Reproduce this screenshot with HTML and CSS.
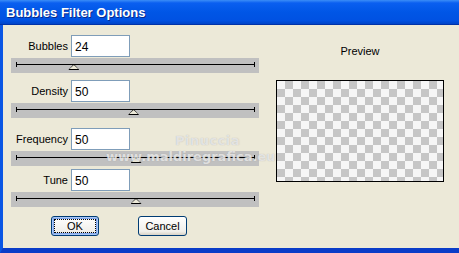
FILE: index.html
```html
<!DOCTYPE html>
<html lang="en">
<head>
    <meta charset="UTF-8">
    <title>Bubbles Filter Options</title>
    <link rel="stylesheet" href="styles.css">
</head>
<body>
    <div class="window">
        <div class="titlebar">Bubbles Filter Options</div>
        <div class="client">
            <div class="controls">
                <div class="param">
                    <div class="field">
                        <label for="bubbles">Bubbles</label>
                        <input type="text" id="bubbles" value="24">
                    </div>
                    <div class="slider"><div class="rail"><span class="thumb" style="left: 24%"></span></div></div>
                </div>
                <div class="param">
                    <div class="field">
                        <label for="density">Density</label>
                        <input type="text" id="density" value="50">
                    </div>
                    <div class="slider"><div class="rail"><span class="thumb" style="left: 49%"></span></div></div>
                </div>
                <div class="param">
                    <div class="field">
                        <label for="frequency">Frequency</label>
                        <input type="text" id="frequency" value="50">
                    </div>
                    <div class="slider"><div class="rail"><span class="thumb" style="left: 50%"></span></div></div>
                </div>
                <div class="param">
                    <div class="field">
                        <label for="tune">Tune</label>
                        <input type="text" id="tune" value="50">
                    </div>
                    <div class="slider"><div class="rail"><span class="thumb" style="left: 50%"></span></div></div>
                </div>
                <div class="buttons">
                    <button type="button" class="default">OK</button>
                    <button type="button">Cancel</button>
                </div>
            </div>

            <div class="preview">
                <div class="preview-title">Preview</div>
                <div class="preview-box"></div>
            </div>

            <!-- watermark over the dialog -->
            <div class="watermark">
                <span class="wm-name">Pinuccia</span>
                <span class="wm-site">www.maldiregrafica.eu</span>
            </div>
        </div>
    </div>
</body>
</html>
```

FILE: styles.css
```css
* {
    box-sizing: border-box;
}
body {
    margin: 0;
    font-family: 'Liberation Sans', Arial, sans-serif;
    font-size: 11px;
    color: #000;
    background: #ece9d8;
}
.window {
    width: 459px;
    height: 253px;
    display: flex;
    flex-direction: column;
    overflow: hidden;
}
.titlebar {
    height: 25px;
    padding: 5px 0 0 6px;
    background: linear-gradient(#3b8df7 0, #0a5ff0 3px, #0056e6 50%, #0051e2 85%, #0044c8 100%);
    border-bottom: 1px solid #0032a8;
    color: #fff;
    font-weight: bold;
    font-size: 13px;
    text-shadow: 1px 1px 0 #0a2a8a;
}
.client {
    position: relative;
    flex: 1;
    display: flex;
    background: #ece9d8;
    border-left: 3px solid #0a56e4;
    border-bottom: 5px solid #0a3cc8;
}
.controls {
    width: 256px;
    padding: 10px 0 0 8px;
}
.param {
    margin-bottom: 7px;
}
.param:nth-child(2) {
    margin-bottom: 10px;
}
.param:nth-child(3) {
    margin-bottom: 3px;
}
.field {
    display: flex;
    align-items: center;
}
.field label {
    width: 57px;
    margin-right: 3px;
    text-align: right;
}
.field input {
    width: 59px;
    height: 22px;
    padding: 1px 3px 0;
    border: 1px solid #7f9db9;
    background: #fff;
    font-family: 'Liberation Sans', Arial, sans-serif;
    font-size: 12px;
    color: #000;
}
.slider {
    width: 248px;
    height: 15px;
    margin-top: 1px;
    padding: 6px 4px 0 5px;
    background: #c0c0c0;
}
.rail {
    position: relative;
    height: 1px;
    background: #000;
}
.rail::before,
.rail::after {
    content: "";
    position: absolute;
    top: -2px;
    width: 1px;
    height: 5px;
    background: #000;
}
.rail::before {
    left: 0;
}
.rail::after {
    right: 0;
}
.thumb {
    position: absolute;
    top: 0;
    width: 11px;
    height: 6px;
    margin-left: -5px;
    background: #000;
    clip-path: polygon(50% 0, 100% 100%, 0 100%);
}
.thumb::after {
    content: "";
    position: absolute;
    left: 1px;
    top: 1px;
    width: 9px;
    height: 4px;
    background: #ece9d8;
    clip-path: polygon(50% 0, 100% 100%, 0 100%);
}
.buttons {
    display: flex;
    gap: 39px;
    padding: 2px 0 0 40px;
}
.buttons button {
    width: 49px;
    height: 20px;
    padding: 0;
    border: 1px solid #003c74;
    border-radius: 3px;
    background: linear-gradient(#ffffff, #f0efea 80%, #d8d2c6);
    font-family: 'Liberation Sans', Arial, sans-serif;
    font-size: 11px;
    color: #000;
}
.buttons button.default {
    width: 48px;
    box-shadow: inset 0 0 0 1px #a9c6f5, inset 0 0 0 2px #7ea6ec;
    outline: 1px dotted #000;
    outline-offset: -4px;
}
.preview {
    width: 168px;
    margin-left: 17px;
    padding-top: 20px;
}
.preview-title {
    text-align: center;
    font-size: 11px;
    height: 35px;
}
.preview-box {
    height: 102px;
    border: 1px solid #000;
    background: repeating-conic-gradient(#c6c6c6 0 25%, #f6f6f6 0 50%) 0 0 / 16px 16px;
}
.watermark {
    position: absolute;
    left: 103px;
    top: 108px;
    display: flex;
    flex-direction: column;
    align-items: center;
    font-family: 'DejaVu Sans', sans-serif;
    font-weight: bold;
    color: rgba(240, 240, 240, 0.8);
    text-shadow: 0 0 1px rgba(140, 140, 140, 0.6);
    pointer-events: none;
}
.wm-name {
    font-size: 13px;
    margin-left: 34px;
    letter-spacing: 0.5px;
}
.wm-site {
    font-size: 13px;
    margin-top: 1px;
}
```
